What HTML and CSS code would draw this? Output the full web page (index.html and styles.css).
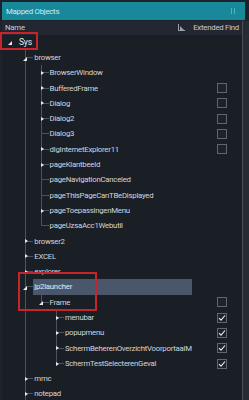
FILE: index.html
```html
<!DOCTYPE html>
<html>
<head>
<meta charset="utf-8">
<link rel="stylesheet" href="styles.css">
</head>
<body>
<div class="window">
  <div class="titlebar">
    <span class="title">Mapped Objects</span>
    <svg class="pin" width="4" height="6" viewBox="0 0 4 6"><rect x="0" y="0" width="1" height="6"/><rect x="3" y="0" width="1" height="6"/></svg>
  </div>
  <div class="body">
    <div class="main">
      <div class="header">
        <span class="h-name">Name</span>
        <span class="h-right">
          <svg class="h-icon" width="7" height="7" viewBox="0 0 7 7"><path d="M0 0h1v6h6v1H0z"/><path d="M2 2l4 4H2z"/></svg>
          <span>Extended Find</span>
        </span>
      </div>
      <div class="tree">
        <div class="row"><span class="name"><span class="own root"><i class="exp"></i></span><span class="label strong">Sys</span></span></div>

        <div class="row"><span class="name"><span class="g"></span><span class="own tee"><i class="exp"></i></span><span class="label">browser</span></span></div>
        <div class="row"><span class="name"><span class="g"></span><span class="g pipe"></span><span class="own tee"><i class="col"></i></span><span class="label">BrowserWindow</span></span></div>
        <div class="row"><span class="name"><span class="g"></span><span class="g pipe"></span><span class="own tee"><i class="col"></i></span><span class="label">BufferedFrame</span></span><span class="cb"></span></div>
        <div class="row"><span class="name"><span class="g"></span><span class="g pipe"></span><span class="own tee"><i class="col"></i></span><span class="label">Dialog</span></span><span class="cb"></span></div>
        <div class="row"><span class="name"><span class="g"></span><span class="g pipe"></span><span class="own tee"><i class="col"></i></span><span class="label">Dialog2</span></span><span class="cb"></span></div>
        <div class="row"><span class="name"><span class="g"></span><span class="g pipe"></span><span class="own tee"></span><span class="label">Dialog3</span></span><span class="cb"></span></div>
        <div class="row"><span class="name"><span class="g"></span><span class="g pipe"></span><span class="own tee"><i class="col"></i></span><span class="label">dlgInternetExplorer11</span></span><span class="cb"></span></div>
        <div class="row"><span class="name"><span class="g"></span><span class="g pipe"></span><span class="own tee"><i class="col"></i></span><span class="label">pageKlantbeeld</span></span></div>
        <div class="row"><span class="name"><span class="g"></span><span class="g pipe"></span><span class="own tee"></span><span class="label">pageNavigationCanceled</span></span></div>
        <div class="row"><span class="name"><span class="g"></span><span class="g pipe"></span><span class="own tee"></span><span class="label">pageThisPageCanTBeDisplayed</span></span></div>
        <div class="row"><span class="name"><span class="g"></span><span class="g pipe"></span><span class="own tee"><i class="col"></i></span><span class="label">pageToepassingenMenu</span></span></div>
        <div class="row"><span class="name"><span class="g"></span><span class="g pipe"></span><span class="own elbow"></span><span class="label">pageUzsaAcc1Webutil</span></span></div>

        <div class="row"><span class="name"><span class="g"></span><span class="own tee"><i class="col"></i></span><span class="label">browser2</span></span></div>
        <div class="row"><span class="name"><span class="g"></span><span class="own tee"><i class="col"></i></span><span class="label">EXCEL</span></span></div>
        <div class="row"><span class="name"><span class="g"></span><span class="own tee"><i class="col"></i></span><span class="label">explorer</span></span></div>
        <div class="row"><span class="name"><span class="g"></span><span class="own tee"><i class="exp"></i></span><span class="label selected">jp2launcher</span></span></div>
        <div class="row"><span class="name"><span class="g"></span><span class="g pipe"></span><span class="own elbow"><i class="exp"></i></span><span class="label">Frame</span></span><span class="cb"></span></div>
        <div class="row"><span class="name"><span class="g"></span><span class="g pipe"></span><span class="g"></span><span class="own tee"><i class="col"></i></span><span class="label">menubar</span></span><span class="cb checked"><svg width="8" height="8" viewBox="0 0 8 8"><path d="M1 4.2l2 2L7 1.5"/></svg></span></div>
        <div class="row"><span class="name"><span class="g"></span><span class="g pipe"></span><span class="g"></span><span class="own tee"><i class="col"></i></span><span class="label">popupmenu</span></span><span class="cb checked"><svg width="8" height="8" viewBox="0 0 8 8"><path d="M1 4.2l2 2L7 1.5"/></svg></span></div>
        <div class="row"><span class="name"><span class="g"></span><span class="g pipe"></span><span class="g"></span><span class="own tee"><i class="col"></i></span><span class="label">SchermBeherenOverzichtVoorportaalM</span></span><span class="cb checked"><svg width="8" height="8" viewBox="0 0 8 8"><path d="M1 4.2l2 2L7 1.5"/></svg></span></div>
        <div class="row"><span class="name"><span class="g"></span><span class="g pipe"></span><span class="g"></span><span class="own elbow"><i class="col"></i></span><span class="label">SchermTestSelecterenGeval</span></span><span class="cb checked"><svg width="8" height="8" viewBox="0 0 8 8"><path d="M1 4.2l2 2L7 1.5"/></svg></span></div>

        <div class="row"><span class="name"><span class="g"></span><span class="own tee"><i class="col"></i></span><span class="label">mmc</span></span></div>
        <div class="row"><span class="name"><span class="g"></span><span class="own tee"><i class="col"></i></span><span class="label">notepad</span></span></div>
      </div>
    </div>
    <div class="vline"></div>
    <div class="scroll"></div>
  </div>
  <div class="mark mark-sys"></div>
  <div class="mark mark-jp2"></div>
</div>
</body>
</html>
```
FILE: styles.css
```css
:root {
  --line: #4d535b;
}
* { box-sizing: border-box; }
html, body {
  margin: 0;
  padding: 0;
  background: #1e222a;
}
body {
  font-family: Roboto, "Liberation Sans", sans-serif;
  font-size: 7.8px;
  letter-spacing: -0.25px;
  color: #d3d6db;
}
.window {
  position: relative;
  width: 249px;
  height: 400px;
  overflow: hidden;
  display: flex;
  flex-direction: column;
  background: #1e222a;
}
.titlebar {
  flex: none;
  height: 18px;
  margin: 2px 4px 0 2px;
  background: #18889b;
  display: flex;
  align-items: center;
  justify-content: space-between;
  padding: 0 10px 0 4px;
  color: #d9ecf0;
}
.pin { fill: #4fb3c2; }
.body {
  flex: 1;
  display: flex;
  margin: 1px 0 0 2px;
  min-height: 0;
}
.main {
  width: 240px;
  display: flex;
  flex-direction: column;
  background: #1a1e25;
}
.header {
  flex: none;
  height: 13.65px;
  background: #222731;
  display: flex;
  align-items: center;
  justify-content: space-between;
  padding: 0 3px 0 3px;
  color: #c9cdd3;
}
.h-right {
  display: flex;
  align-items: center;
  gap: 8px;
}
.h-icon { fill: #9aa0a8; }
.vline {
  width: 1px;
  background: #4a4f57;
}
.scroll {
  flex: 1;
  background: #272c34;
}
.tree {
  display: flex;
  flex-direction: column;
}
.row {
  display: flex;
  align-items: center;
  height: 15.3px;
  flex: none;
}
.name {
  display: flex;
  align-items: center;
  width: 190px;
  height: 100%;
  padding-left: 4px;
  overflow: hidden;
  flex: none;
}
.g {
  flex: none;
  width: 15.3px;
  height: 100%;
}
.g.pipe {
  background: linear-gradient(var(--line), var(--line)) 4px 0 / 1px 100% no-repeat;
}
.own {
  flex: none;
  width: 12px;
  height: 100%;
  display: flex;
  align-items: center;
}
.own.tee {
  background:
    linear-gradient(var(--line), var(--line)) 4px 0 / 1px 100% no-repeat,
    linear-gradient(var(--line), var(--line)) 4px 7px / 8px 1px no-repeat;
}
.own.elbow {
  background:
    linear-gradient(var(--line), var(--line)) 4px 0 / 1px 8px no-repeat,
    linear-gradient(var(--line), var(--line)) 4px 7px / 8px 1px no-repeat;
}
.exp {
  display: block;
  width: 0;
  height: 0;
  margin: 2px 0 0 2px;
  border-bottom: 4px solid #e9ebee;
  border-left: 4px solid transparent;
}
.col {
  display: block;
  width: 0;
  height: 0;
  margin: 0 0 0 4px;
  border-left: 3px solid #e9ebee;
  border-top: 2.5px solid transparent;
  border-bottom: 2.5px solid transparent;
}
.label {
  flex: none;
  white-space: nowrap;
  line-height: 15.3px;
  padding-left: 1px;
}
.label.strong { color: #e8eaed; font-size: 8.6px; }
.label.selected {
  width: 158.4px;
  background: #4a576b;
  color: #e6e9ee;
}
.cb {
  flex: none;
  width: 10px;
  height: 10px;
  margin-left: auto;
  margin-right: 15px;
  border: 1px solid #60666f;
  background: #1e2229;
  display: flex;
  align-items: center;
  justify-content: center;
}
.cb svg {
  fill: none;
  stroke: #eef0f2;
  stroke-width: 1.1;
}
.mark {
  position: absolute;
  border: 2px solid #c5252b;
}
.mark-sys {
  left: 0;
  top: 32px;
  width: 38px;
  height: 18px;
}
.mark-jp2 {
  left: 18px;
  top: 272px;
  width: 79px;
  height: 39px;
}
```
